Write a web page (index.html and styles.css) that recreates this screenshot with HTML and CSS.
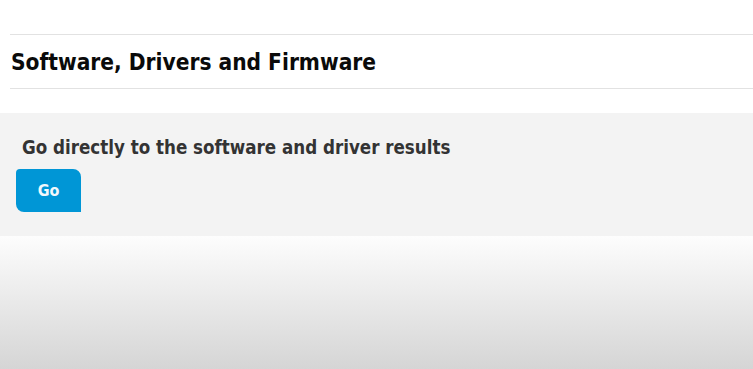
FILE: index.html
```html
<!DOCTYPE html>
<html>
<head>
    <title>Software, Drivers and Firmware</title>
    <link rel="stylesheet" href="styles.css">
</head>
<body>
    <div class="section-head">
        <h1>Software, Drivers and Firmware</h1>
    </div>

    <div class="panel">
        <h2>Go directly to the software and driver results</h2>
        <button type="button" class="go-btn">Go</button>
    </div>

    <div class="fade"></div>
</body>
</html>
```
FILE: styles.css
```css
body { margin: 0; font-family: "Liberation Sans Narrow", "DejaVu Sans Condensed", "Liberation Sans", sans-serif; background: #fff; height: 369px; display: flex; flex-direction: column; overflow: hidden; }
.section-head { margin: 34px 0 0 10px; border-top: 1px solid #e2e2e2; border-bottom: 1px solid #e2e2e2; height: 53px; display: flex; align-items: center; }
h1 { margin: 0; padding-left: 1px; font-size: 22.5px; font-weight: bold; color: #0a0a0a; }
.panel { margin-top: 24px; background: #f3f3f3; height: 123px; padding: 24px 0 0 16px; box-sizing: border-box; }
h2 { margin: 0 0 11px 6px; font-size: 18.6px; font-weight: bold; color: #333; }
.go-btn { width: 65px; height: 43px; background: #0096d6; color: #f2f8fc; border: none; border-radius: 4px 8px 0 8px; font-family: inherit; font-size: 16px; font-weight: bold; cursor: pointer; }
.fade { flex: 1; background: linear-gradient(#fdfdfd, #d5d5d5); }
```
